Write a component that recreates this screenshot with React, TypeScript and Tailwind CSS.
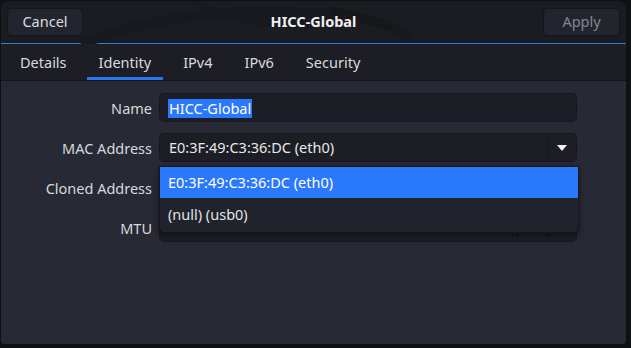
import React from "react";

function Field({ children, className = "" }: { children?: React.ReactNode; className?: string }) {
  return (
    <div
      className={
        "h-[29px] w-[418px] rounded-[5px] bg-[#1d1e25] border border-[#17181d] flex items-center text-[14.5px] text-[#e8e8ea] " +
        className
      }
    >
      {children}
    </div>
  );
}

export default function App() {
  const font = { fontFamily: '"Noto Sans", "Open Sans", sans-serif' };
  return (
    <div className="w-[631px] h-[348px] bg-[#101115] overflow-hidden" style={font}>
      <div className="w-[627px] h-[345px] bg-[#272935] rounded-t-[9px] rounded-b-[4px] border border-[#0e0f12] flex flex-col overflow-hidden">
        {/* header */}
        <div className="relative h-[43px] shrink-0 bg-[#1b1c22] border-b border-[#2f7bd6] flex items-center justify-between px-[6px]">
          <svg className="absolute left-0 top-0" width="627" height="43" viewBox="0 0 627 43">
            <path d="M80 43 C140 20 200 8 300 12 C360 14 390 22 410 36" stroke="#18191e" strokeWidth="10" fill="none" />
            <path d="M190 0 C230 20 260 26 320 22" stroke="#18191f" strokeWidth="6" fill="none" />
            <path d="M330 6 C360 10 385 18 400 30 L380 28 C360 20 345 16 330 14 Z" fill="#16171b" />
          </svg>
          <div className="relative h-[28px] w-[76px] rounded-[5px] bg-[#23252e] border border-[#15161b] flex items-center justify-center text-[14.5px] text-[#dcdce0]">
            Cancel
          </div>
          <div className="absolute left-0 right-0 text-center text-[14.5px] font-bold text-[#f0f0f2] pointer-events-none">
            HICC-Global
          </div>
          <div className="relative h-[28px] w-[77px] rounded-[5px] bg-[#23252e] border border-[#15161b] flex items-center justify-center text-[14.5px] text-[#83858c]">
            Apply
          </div>
        </div>
        {/* tabs */}
        <div className="h-[37px] shrink-0 bg-[#1d1e25] border-b border-[#131419] flex items-stretch pl-[7px] gap-[8px] text-[14.5px] text-[#dadade]">
          <div className="px-[12px] flex items-center justify-center pt-[1px]">Details</div>
          <div className="px-[12px] flex items-center justify-center relative pt-[1px]">
            Identity
            <div className="absolute bottom-0 left-0 right-0 h-[3px] bg-[#2a78f0]" />
          </div>
          <div className="px-[12px] flex items-center justify-center pt-[1px]">IPv4</div>
          <div className="px-[12px] flex items-center justify-center pt-[1px]">IPv6</div>
          <div className="px-[12px] flex items-center justify-center pt-[1px]">Security</div>
        </div>
        {/* content */}
        <div className="relative flex-1 pt-[12px]">
          <div className="grid grid-cols-[151px_418px] gap-x-[7px] gap-y-[11px] items-center text-[14.5px] text-[#d8d8dc]">
            <div className="text-right pt-[2px]">Name</div>
            <Field className="pl-[8px] pt-[1px]">
              <span className="bg-[#2a78fc] text-white px-[1px] leading-[19px]">HICC-Global</span>
            </Field>
            <div className="text-right pt-[2px]">MAC Address</div>
            <Field className="pl-[9px]">
              <span className="flex-1 pt-[1px]">E0:3F:49:C3:36:DC (eth0)</span>
              <div className="w-[29px] h-full border-l border-[#15161b] flex items-center justify-center">
                <svg width="10" height="6" viewBox="0 0 10 6">
                  <path d="M0 0 H10 L5 6 Z" fill="#f2f2f2" />
                </svg>
              </div>
            </Field>
            <div className="text-right pt-[2px]">Cloned Address</div>
            <Field />
            <div className="text-right pt-[2px]">MTU</div>
            <Field>
              <span className="flex-1" />
              <div className="w-[30px] h-full border-l border-[#15161b]" />
              <div className="w-[29px] h-full border-l border-[#15161b] flex items-center justify-center text-[#e0e0e0]">+</div>
            </Field>
          </div>
          {/* popup */}
          <div className="absolute left-[158px] top-[85px] w-[420px] h-[67px] bg-[#21232c] rounded-b-[5px] border border-[#17181d] shadow-[0_2px_6px_rgba(0,0,0,0.5)] flex flex-col text-[14.5px] overflow-hidden">
            <div className="h-[31px] bg-[#2a78fc] text-white flex items-center pl-[8px] pt-[1px]">E0:3F:49:C3:36:DC (eth0)</div>
            <div className="flex-1 text-[#e2e2e6] flex items-center pl-[8px]">(null) (usb0)</div>
          </div>
        </div>
      </div>
    </div>
  );
}
